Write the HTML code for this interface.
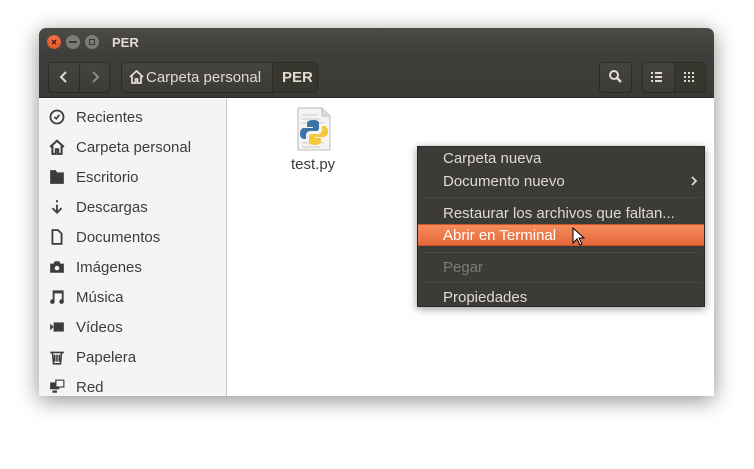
<!DOCTYPE html>
<html><head><meta charset="utf-8"><style>
*{margin:0;padding:0;box-sizing:border-box}
body{width:754px;height:469px;background:#fff;font-family:"Liberation Sans","DejaVu Sans",sans-serif;position:relative;overflow:hidden}
.win{position:absolute;left:39px;top:28px;width:675px;height:368px;border-radius:7px 7px 0 0;box-shadow:0 4px 22px rgba(0,0,0,.45);overflow:hidden;background:#fff}
.title{position:absolute;left:0;top:0;width:675px;height:28px;background:linear-gradient(#4c4a45,#3f3d39);}
.tool{position:absolute;left:0;top:28px;width:675px;height:42px;background:linear-gradient(#403e3a,#3a3935);border-bottom:1px solid #2a2927}
.ttl{position:absolute;left:73px;top:7px;color:#dfdbd2;font-weight:bold;font-size:13px}
.wb{position:absolute;top:7px;width:14px;height:14px;border-radius:50%}
.btn{position:absolute;top:34px;height:31px;border:1px solid #2c2b28;border-radius:4px;background:linear-gradient(#46443f,#3c3b37);}
.side{position:absolute;left:0;top:71px;width:188px;height:297px;background:#f5f4f2;border-right:1px solid #c8c6c2}
.si{position:absolute;left:37px;font-size:15px;color:#3c3c3c}
.ic{position:absolute;left:10px;width:16px;height:16px}
.menu{position:absolute;left:417px;top:146px;width:288px;height:161px;background:#3c3b37;border:1px solid #2a2927;box-shadow:0 2px 8px rgba(0,0,0,.4)}
.mi{position:absolute;left:25px;font-size:15px;color:#dfdbd2}
.sep{position:absolute;left:4px;right:4px;height:1px;background:#2f2e2b;border-bottom:1px solid #4a4844}
</style></head><body>
<div class="win">
<div class="title">
<div class="wb" style="left:8px;background:radial-gradient(circle at 50% 35%,#f37a52,#d9461b)"></div>
<svg style="position:absolute;left:8px;top:7px" width="14" height="14"><path d="M5 5l4 4M9 5l-4 4" stroke="#4a1c0c" stroke-width="1.5"/></svg>
<div class="wb" style="left:27px;background:#7d7b75"></div>
<div style="position:absolute;left:30px;top:13px;width:8px;height:2px;background:#3a3936"></div>
<div class="wb" style="left:46px;background:#7d7b75"></div>
<div style="position:absolute;left:50px;top:11px;width:6px;height:6px;border:1.5px solid #3a3936"></div>
<div class="ttl">PER</div>
</div>
<div class="tool"></div>
<div class="btn" style="left:9px;width:62px"></div>
<div style="position:absolute;left:40px;top:35px;width:1px;height:29px;background:#2c2b28"></div>
<svg style="position:absolute;left:19px;top:42px" width="12" height="14"><path d="M8 2L3 7l5 5" stroke="#dfdbd2" stroke-width="2" fill="none"/></svg>
<svg style="position:absolute;left:50px;top:42px" width="12" height="14"><path d="M4 2l5 5-5 5" stroke="#8c8a85" stroke-width="2" fill="none"/></svg>
<div class="btn" style="left:82px;width:197px"></div>
<div style="position:absolute;left:233px;top:35px;width:45px;height:29px;background:#37362f;border-left:1px solid #2c2b28;border-radius:0 3px 3px 0"></div>
<svg style="position:absolute;left:90px;top:42px" width="15" height="14"><path d="M1 7L7.5 1 14 7M3 6v7h3.5V9h2v4H12V6" stroke="#dfdbd2" stroke-width="1.8" fill="none"/></svg>
<div style="position:absolute;left:107px;top:41px;color:#dfdbd2;font-size:15px">Carpeta personal</div>
<div style="position:absolute;left:243px;top:41px;color:#dfdbd2;font-size:15px;font-weight:bold">PER</div>
<div class="btn" style="left:560px;width:33px"></div>
<svg style="position:absolute;left:569px;top:41px" width="16" height="16"><circle cx="6" cy="6" r="4" stroke="#dfdbd2" stroke-width="2" fill="none"/><path d="M9 9l4 4" stroke="#dfdbd2" stroke-width="2.5"/></svg>
<div class="btn" style="left:603px;width:64px"></div>
<div style="position:absolute;left:635px;top:35px;width:31px;height:29px;background:#37362f;border-left:1px solid #2c2b28;border-radius:0 3px 3px 0"></div>
<svg style="position:absolute;left:612px;top:43px" width="13" height="12" fill="#dfdbd2"><rect x="0" y="1" width="2" height="2"/><rect x="4" y="1" width="7" height="2"/><rect x="0" y="5" width="2" height="2"/><rect x="4" y="5" width="7" height="2"/><rect x="0" y="9" width="2" height="2"/><rect x="4" y="9" width="7" height="2"/></svg>
<svg style="position:absolute;left:645px;top:43px" width="12" height="12" fill="#dfdbd2"><rect x="0" y="1" width="2" height="2"/><rect x="4" y="1" width="2" height="2"/><rect x="8" y="1" width="2" height="2"/><rect x="0" y="5" width="2" height="2"/><rect x="4" y="5" width="2" height="2"/><rect x="8" y="5" width="2" height="2"/><rect x="0" y="9" width="2" height="2"/><rect x="4" y="9" width="2" height="2"/><rect x="8" y="9" width="2" height="2"/></svg>
<div class="side">
<svg class="ic" style="top:10px" viewBox="0 0 14 14"><circle cx="7" cy="7" r="5.7" stroke="#3c3c3c" stroke-width="1.6" fill="none"/><path d="M4.5 7l2 1.5 2.5-3.5" stroke="#3c3c3c" stroke-width="1.5" fill="none"/></svg><div class="si" style="top:10px">Recientes</div>
<svg class="ic" style="top:40px" viewBox="0 0 14 14"><path d="M1 7L7 1.5 13 7M3 6v7h3V9h2v4h3V6" stroke="#3c3c3c" stroke-width="1.8" fill="none"/></svg><div class="si" style="top:40px">Carpeta personal</div>
<svg class="ic" style="top:70px" viewBox="0 0 14 14"><path d="M1 1h5l1 2h6v10H1z" fill="#3c3c3c"/></svg><div class="si" style="top:70px">Escritorio</div>
<svg class="ic" style="top:100px" viewBox="0 0 14 14"><path d="M7 1v2M7 5v6M3 8l4 4 4-4" stroke="#3c3c3c" stroke-width="1.6" fill="none"/></svg><div class="si" style="top:100px">Descargas</div>
<svg class="ic" style="top:130px" viewBox="0 0 14 14"><path d="M3 1h5l3 3v9H3z" stroke="#3c3c3c" stroke-width="1.6" fill="none"/></svg><div class="si" style="top:130px">Documentos</div>
<svg class="ic" style="top:160px" viewBox="0 0 14 14"><path d="M1 4h3l1-2h4l1 2h3v8H1z" fill="#3c3c3c"/><circle cx="7" cy="8" r="2" fill="#f5f4f2"/></svg><div class="si" style="top:160px">Imágenes</div>
<svg class="ic" style="top:190px" viewBox="0 0 14 14"><path d="M4 11V2h8v9M4 3h8" stroke="#3c3c3c" stroke-width="1.6" fill="none"/><circle cx="3" cy="11" r="2" fill="#3c3c3c"/><circle cx="11" cy="11" r="2" fill="#3c3c3c"/></svg><div class="si" style="top:190px">Música</div>
<svg class="ic" style="top:220px" viewBox="0 0 14 14"><path d="M1 4l3 3-3 3z" fill="#3c3c3c"/><rect x="4" y="3" width="9" height="8" fill="#3c3c3c"/></svg><div class="si" style="top:220px">Vídeos</div>
<svg class="ic" style="top:250px" viewBox="0 0 14 14"><path d="M1 3h12M3 3l1 10h6l1-10M5 5v6M7 5v6M9 5v6" stroke="#3c3c3c" stroke-width="1.4" fill="none"/></svg><div class="si" style="top:250px">Papelera</div>
<svg class="ic" style="top:280px" viewBox="0 0 14 14"><rect x="1" y="3" width="8" height="6" fill="#3c3c3c"/><rect x="6" y="1" width="7" height="6" stroke="#3c3c3c" fill="#f5f4f2"/><path d="M3 11h4" stroke="#3c3c3c" stroke-width="2"/></svg><div class="si" style="top:280px">Red</div>
</div>
<svg style="position:absolute;left:257px;top:79px" width="36" height="44" viewBox="0 0 36 44"><path d="M2 1h24l8 8v34H2z" fill="#f4f4f4" stroke="#bbb"/><path d="M26 1v8h8" fill="#ddd" stroke="#bbb"/><g stroke="#ccc"><path d="M6 8h16M6 12h18M6 16h22M6 36h22M6 40h18"/></g><path d="M17 13c-5 0-6 2-6 4v3h6v1H8c-3 0-4 3-4 6s2 5 4 5h2v-4c0-2 2-4 4-4h6c2 0 3-1 3-3v-5c0-2-2-3-6-3z" fill="#3d74a6"/><path d="M19 38c5 0 6-2 6-4v-3h-6v-1h9c3 0 4-3 4-6s-2-5-4-5h-2v4c0 2-2 4-4 4h-6c-2 0-3 1-3 3v5c0 2 2 3 6 3z" fill="#f5c93c"/></svg>
<div style="position:absolute;left:252px;top:128px;font-size:15px;color:#3c3c3c">test.py</div>
</div>
<div class="menu">
<div class="mi" style="top:3px">Carpeta nueva</div>
<div class="mi" style="top:26px">Documento nuevo</div>
<svg style="position:absolute;left:272px;top:28px" width="8" height="12"><path d="M2 2l4 4-4 4" stroke="#dfdbd2" stroke-width="1.8" fill="none"/></svg>
<div class="sep" style="top:50px"></div>
<div class="mi" style="top:58px">Restaurar los archivos que faltan...</div>
<div style="position:absolute;left:0;top:77px;width:286px;height:22px;background:linear-gradient(#f58c5c,#e6683a);border-top:1px solid #c8542c;border-bottom:1px solid #c8542c"></div>
<div class="mi" style="top:80px;color:#fff">Abrir en Terminal</div>
<div class="sep" style="top:105px"></div>
<div class="mi" style="top:112px;color:#7d7b75">Pegar</div>
<div class="sep" style="top:135px"></div>
<div class="mi" style="top:142px">Propiedades</div>
</div>
<svg style="position:absolute;left:572px;top:227px" width="14" height="20"><path d="M1 1v15l4-4 3 6 2-1-3-6h5z" fill="#fff" stroke="#000"/></svg>
</body></html>
